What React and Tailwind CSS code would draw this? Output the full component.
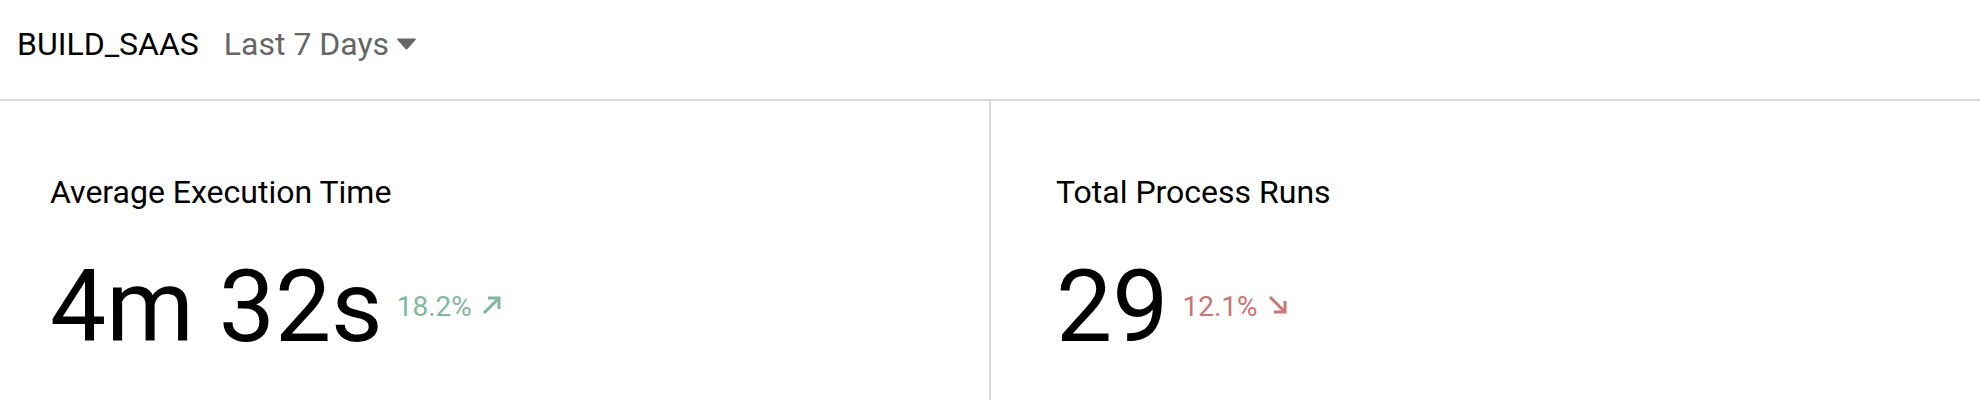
import React from "react";

const stats = [
  {
    title: "Average Execution Time",
    value: "4m 32s",
    change: "18.2%",
    up: true,
  },
  {
    title: "Total Process Runs",
    value: "29",
    change: "12.1%",
    up: false,
  },
];

const ArrowUpRight = () => (
  <svg
    width="20"
    height="20"
    viewBox="0 0 20 20"
    fill="none"
    stroke="currentColor"
    strokeWidth="3"
    strokeLinejoin="miter"
  >
    <path d="M2 18L16.5 3.5" />
    <path d="M6 3H17V14" />
  </svg>
);

const ArrowDownRight = () => (
  <svg
    width="20"
    height="20"
    viewBox="0 0 20 20"
    fill="none"
    stroke="currentColor"
    strokeWidth="3"
    strokeLinejoin="miter"
  >
    <path d="M2 2L16.5 16.5" />
    <path d="M17 6V17H6" />
  </svg>
);

const StatCard = ({ stat }) => (
  <div className="pt-[71px]">
    <h3 className="text-[32px] leading-[40px] text-black font-normal">
      {stat.title}
    </h3>
    <div className="mt-[45px] flex items-center">
      <span className="text-[100px] leading-none text-black">{stat.value}</span>
      <span
        className={`ml-[14px] flex items-center ${
          stat.up ? "text-[#7fb89c]" : "text-[#c97373]"
        }`}
      >
        <span className="text-[28px] leading-[28px]">{stat.change}</span>
        <span className="ml-[10px] -mt-[5px]">
          {stat.up ? <ArrowUpRight /> : <ArrowDownRight />}
        </span>
      </span>
    </div>
  </div>
);

export default function App() {
  return (
    <div className="w-full h-[400px] bg-white font-['Roboto',sans-serif] overflow-hidden">
      {/* Header */}
      <div className="h-[101px] border-b-2 border-[#d7d7dc] pl-[17px] pt-[24px]">
        <div className="flex items-center h-[40px]">
          <span className="text-[32px] leading-[40px] text-black">
            BUILD_SAAS
          </span>
          <button className="ml-[25px] flex items-center text-[#666666]">
            <span className="text-[32px] leading-[40px]">Last 7 Days</span>
            <svg
              className="ml-[8px]"
              width="19"
              height="12"
              viewBox="0 0 19 12"
              fill="currentColor"
            >
              <path d="M1.2 0.5h16.6c0.9 0 1.3 1 0.7 1.6l-8.3 9.2c-0.4 0.4-1 0.4-1.4 0L0.5 2.1C-0.1 1.5 0.3 0.5 1.2 0.5z" />
            </svg>
          </button>
        </div>
      </div>

      {/* Stats */}
      <div className="flex h-[299px]">
        <div className="w-[989px] pl-[50px]">
          <StatCard stat={stats[0]} />
        </div>
        <div className="w-[2px] bg-[#d7d7dc]" />
        <div className="flex-1 pl-[65px]">
          <StatCard stat={stats[1]} />
        </div>
      </div>
    </div>
  );
}
